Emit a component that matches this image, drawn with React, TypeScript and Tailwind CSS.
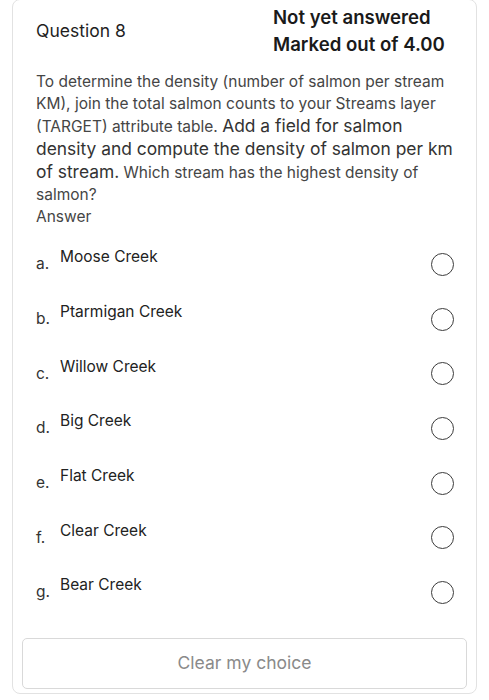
import React from 'react';

const options = [
  { key: 'a.', label: 'Moose Creek' },
  { key: 'b.', label: 'Ptarmigan Creek' },
  { key: 'c.', label: 'Willow Creek' },
  { key: 'd.', label: 'Big Creek' },
  { key: 'e.', label: 'Flat Creek' },
  { key: 'f.', label: 'Clear Creek' },
  { key: 'g.', label: 'Bear Creek' },
];

export default function App() {
  return (
    <div className="w-[489px] h-[700px] bg-white overflow-hidden font-['Inter',sans-serif]">
      <div className="mx-[12px] mt-[-1px] h-[695px] border border-[#e2e2e2] rounded-[8px] flex flex-col">
        {/* Header */}
        <div className="flex pl-[23px] pt-[4px]">
          <div className="w-[237px] pt-[16px] text-[17.5px] text-[#1f1f1f] leading-[22px]">Question 8</div>
          <div className="flex flex-col text-[18.6px] font-semibold text-[#1a1a1a] leading-[27px]">
            <span>Not yet answered</span>
            <span>Marked out of 4.00</span>
          </div>
        </div>

        {/* Question text */}
        <div className="pl-[23px] pr-[18px] pt-[13px] text-[15.5px] leading-[22px] text-[#454545]">
          <p>
            To determine the density (number of salmon per stream KM), join the total salmon counts to your Streams layer
            (TARGET) attribute table.{' '}
            <span className="text-[17.4px] leading-[22px] text-[#333]">
              Add a field for salmon density and compute the density of salmon per km of stream.
            </span>{' '}
            Which stream has the highest density of salmon?
          </p>
          <p>Answer</p>
        </div>

        {/* Options */}
        <div className="flex flex-col pt-[9px]">
          {options.map((o) => (
            <div key={o.key} className="h-[54.7px] flex items-center pl-[23px] pr-[22px]">
              <div className="flex-1 flex items-start -mt-[7px]">
                <span className="w-[24px] pt-[7px] text-[15.5px] text-[#333] leading-[20px]">{o.key}</span>
                <span className="text-[15.5px] text-[#222] leading-[20px]">{o.label}</span>
              </div>
              <span className="w-[23px] h-[23px] rounded-full border-[1.5px] border-[#3c3c3c]" />
            </div>
          ))}
        </div>

        {/* Clear */}
        <div className="px-[9px] pt-[18px]">
          <button className="w-full h-[51px] border border-[#d9d9d9] rounded-[5px] text-[17.5px] text-[#8a8a8a]">
            Clear my choice
          </button>
        </div>
      </div>
    </div>
  );
}
